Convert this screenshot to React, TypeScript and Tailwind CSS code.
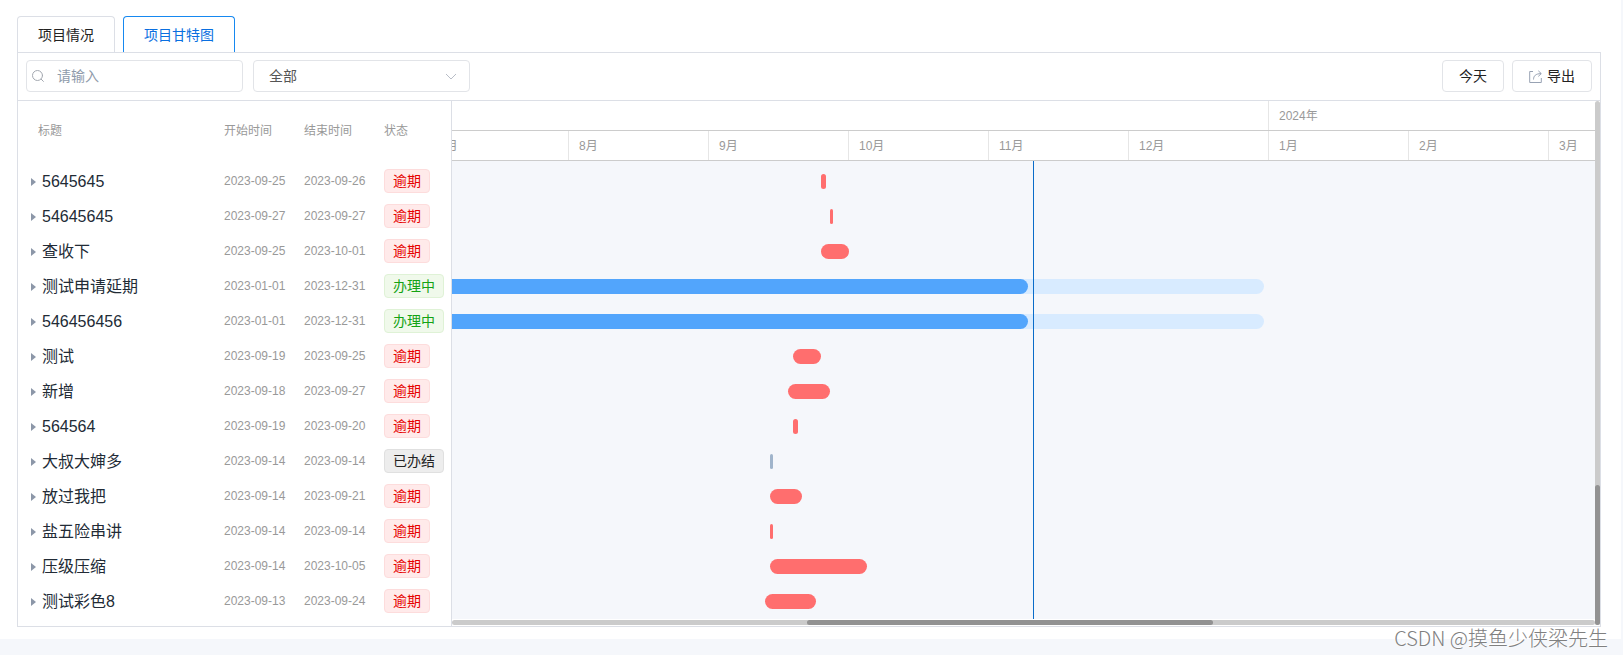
import { useState } from 'react';

type Status = 'overdue' | 'doing' | 'done';

type Task = {
  name: string;
  start: string;
  end: string;
  status: Status;
  // position on the time axis, in px
  left: number;
  width: number;
  progress?: number;
};

const TASKS: Task[] = [
  { name: '5645645', start: '2023-09-25', end: '2023-09-26', status: 'overdue', left: 369, width: 5 },
  { name: '54645645', start: '2023-09-27', end: '2023-09-27', status: 'overdue', left: 378, width: 3 },
  { name: '查收下', start: '2023-09-25', end: '2023-10-01', status: 'overdue', left: 369, width: 28 },
  { name: '测试申请延期', start: '2023-01-01', end: '2023-12-31', status: 'doing', left: -40, width: 852, progress: 616 },
  { name: '546456456', start: '2023-01-01', end: '2023-12-31', status: 'doing', left: -40, width: 852, progress: 616 },
  { name: '测试', start: '2023-09-19', end: '2023-09-25', status: 'overdue', left: 341, width: 28 },
  { name: '新增', start: '2023-09-18', end: '2023-09-27', status: 'overdue', left: 336, width: 42 },
  { name: '564564', start: '2023-09-19', end: '2023-09-20', status: 'overdue', left: 341, width: 5 },
  { name: '大叔大婶多', start: '2023-09-14', end: '2023-09-14', status: 'done', left: 318, width: 3 },
  { name: '放过我把', start: '2023-09-14', end: '2023-09-21', status: 'overdue', left: 318, width: 32 },
  { name: '盐五险串讲', start: '2023-09-14', end: '2023-09-14', status: 'overdue', left: 318, width: 3 },
  { name: '压级压缩', start: '2023-09-14', end: '2023-10-05', status: 'overdue', left: 318, width: 97 },
  { name: '测试彩色8', start: '2023-09-13', end: '2023-09-24', status: 'overdue', left: 313, width: 51 },
];

const MONTHS = ['7月', '8月', '9月', '10月', '11月', '12月', '1月', '2月', '3月'];

const TODAY_LEFT = 581;

const STATUS_LABEL: Record<Status, string> = {
  overdue: '逾期',
  doing: '办理中',
  done: '已办结',
};

const TAG_CLASS: Record<Status, string> = {
  overdue: 'border-[#fddcdc] bg-[#ffeaea] text-[#e60000]',
  doing: 'border-[#dff2d6] bg-[#f0f9eb] text-[#14a314]',
  done: 'border-[#e0e0e0] bg-[#ededed] text-[#222222]',
};

const BAR_CLASS: Record<Status, string> = {
  overdue: 'bg-[#ff6e6e]',
  doing: 'bg-[#d8ebff]',
  done: 'bg-[#a0b4cb]',
};

function SearchIcon() {
  return (
    <svg className="size-3 shrink-0" viewBox="0 0 12 12" fill="none" stroke="#a3a8b0" strokeLinecap="round">
      <circle cx="5.5" cy="5.5" r="5" />
      <path d="M9.2 9.2l2.2 2.2" />
    </svg>
  );
}

function ExportIcon() {
  return (
    <svg className="size-[13px] shrink-0" viewBox="0 0 13 13" fill="none" stroke="#98a2b3">
      <path d="M4 1.5H.7v11h11.6V8" />
      <path d="M4.5 9.5C4.6 6 6.5 3.7 12 3.6" />
      <path d="M9.3.8l3 2.8-3 2.8" />
    </svg>
  );
}

function Toolbar() {
  const [keyword, setKeyword] = useState('');
  const [filter, setFilter] = useState('all');

  return (
    <div className="flex items-center gap-[10px] border-b border-[#dcdfe6] px-2 pt-[7px] pb-2">
      <label className="flex h-8 w-[217px] items-center gap-[13px] rounded border border-[#e2e4e8] px-[5px]">
        <SearchIcon />
        <input
          type="text"
          aria-label="搜索"
          className="min-w-0 flex-1 text-sm text-[#606266] outline-none placeholder:text-[#8f9bab]"
          placeholder="请输入"
          value={keyword}
          onChange={(e) => setKeyword(e.target.value)}
        />
      </label>

      <div className="relative w-[217px]">
        <select
          aria-label="状态筛选"
          className="block h-8 w-full appearance-none rounded border border-[#e2e4e8] bg-white px-[15px] text-sm text-[#555555] outline-none"
          value={filter}
          onChange={(e) => setFilter(e.target.value)}
        >
          <option value="all">全部</option>
          <option value="overdue">逾期</option>
          <option value="doing">办理中</option>
          <option value="done">已办结</option>
        </select>
        <svg
          className="pointer-events-none absolute top-3 right-[13px] h-2 w-3"
          viewBox="0 0 12 8"
          fill="none"
          stroke="#b8bdc7"
        >
          <path d="M1 2l5 5 5-5" />
        </svg>
      </div>

      <div className="ml-auto flex gap-2">
        <button type="button" className="h-8 rounded border border-[#e2e4e8] px-4 text-sm text-[#222222]">
          今天
        </button>
        <button
          type="button"
          className="flex h-8 items-center gap-[5px] rounded border border-[#e2e4e8] px-4 text-sm text-[#222222]"
        >
          <ExportIcon />
          导出
        </button>
      </div>
    </div>
  );
}

function TaskTable() {
  return (
    <div className="w-[434px] shrink-0 border-r border-[#dcdfe6]">
      <table className="w-full table-fixed text-left text-xs text-[#999999]">
        <colgroup>
          <col className="w-[206px]" />
          <col className="w-[80px]" />
          <col className="w-[80px]" />
          <col />
        </colgroup>
        <thead>
          <tr className="h-[63px]">
            <th className="pt-0 pb-1 pl-5 font-normal">标题</th>
            <th className="pt-0 pb-1 font-normal">开始时间</th>
            <th className="pt-0 pb-1 font-normal">结束时间</th>
            <th className="pt-0 pb-1 font-normal">状态</th>
          </tr>
        </thead>
        <tbody>
          {TASKS.map((task) => (
            <tr key={task.name} className="h-[35px]">
              <td className="p-0 pl-[13px]">
                <div className="flex items-center gap-[6px] text-base leading-6 text-[#222b36]">
                  <svg className="h-2 w-[5px]" viewBox="0 0 5 8" fill="#8c97a8">
                    <path d="M0 0l5 4-5 4z" />
                  </svg>
                  {task.name}
                </div>
              </td>
              <td className="p-0 pb-px">{task.start}</td>
              <td className="p-0 pb-px">{task.end}</td>
              <td className="p-0 pb-px">
                <span
                  className={`inline-flex h-6 items-center rounded border px-2 align-middle text-sm leading-none ${TAG_CLASS[task.status]}`}
                >
                  {STATUS_LABEL[task.status]}
                </span>
              </td>
            </tr>
          ))}
        </tbody>
      </table>
    </div>
  );
}

function Chart() {
  return (
    <div className="flex min-w-0 flex-1 flex-col">
      <div className="overflow-hidden text-xs text-[#999999]">
        <div className="flex h-[30px] border-b border-[#cccccc]">
          <div className="w-[816px] shrink-0" />
          <div className="flex flex-1 items-center border-l border-[#e6e6e6] px-[10px]">2024年</div>
        </div>
        <div className="-ml-6 flex h-[30px] border-b border-[#cccccc]">
          {MONTHS.map((month) => (
            <div key={month} className="flex w-[140px] shrink-0 items-center border-l border-[#e6e6e6] px-[10px]">
              {month}
            </div>
          ))}
        </div>
      </div>

      <div className="relative overflow-hidden bg-[#f5f7fb] pt-[3px]">
        {TASKS.map((task) => (
          <div key={task.name} className="flex h-[35px] items-center">
            <div
              className={`h-[15px] shrink-0 overflow-hidden rounded-full ${BAR_CLASS[task.status]}`}
              style={{ marginLeft: task.left, width: task.width }}
            >
              {task.progress && (
                <div className="h-full rounded-full bg-[#52a5fc]" style={{ width: task.progress }} />
              )}
            </div>
          </div>
        ))}
        {/* today marker */}
        <div className="absolute inset-y-0 w-px bg-[#0a6cc9]" style={{ left: TODAY_LEFT }} />
      </div>

      <div className="my-px flex h-[5px] rounded-full bg-[#cbcbcb]">
        <div className="w-[31.1%]" />
        <div className="w-[35.5%] rounded-full bg-[#929292]" />
      </div>
    </div>
  );
}

export default function App() {
  return (
    <div className="relative bg-[#f5f7fb] pr-[2px] pb-4 font-['Liberation_Sans','Noto_Sans_CJK_SC',sans-serif]">
      <div className="bg-white pt-4 pr-5 pb-3 pl-[17px]">
        <nav className="flex gap-2">
          <button
            type="button"
            className="h-9 rounded-t border border-b-0 border-[#dcdfe6] px-5 text-sm text-[#222222]"
          >
            项目情况
          </button>
          <button
            type="button"
            className="h-9 rounded-t border border-b-0 border-[#1688f0] px-5 text-sm text-[#0a6fe0]"
          >
            项目甘特图
          </button>
        </nav>

        <main className="border border-[#dcdfe6]">
          <Toolbar />
          <div className="flex">
            <TaskTable />
            <Chart />
            <div className="mb-px flex w-[5px] shrink-0 flex-col justify-end rounded-full bg-[#cbcbcb]">
              <div className="h-[140px] rounded-full bg-[#929292]" />
            </div>
          </div>
        </main>
      </div>

      <div className="pointer-events-none absolute right-[15px] bottom-[3px] font-['Noto_Sans_CJK_SC',sans-serif] text-xl leading-7 font-light text-[#808080] [text-shadow:-1px_-1px_0_#ffffff]">
        CSDN @摸鱼少侠梁先生
      </div>
    </div>
  );
}
